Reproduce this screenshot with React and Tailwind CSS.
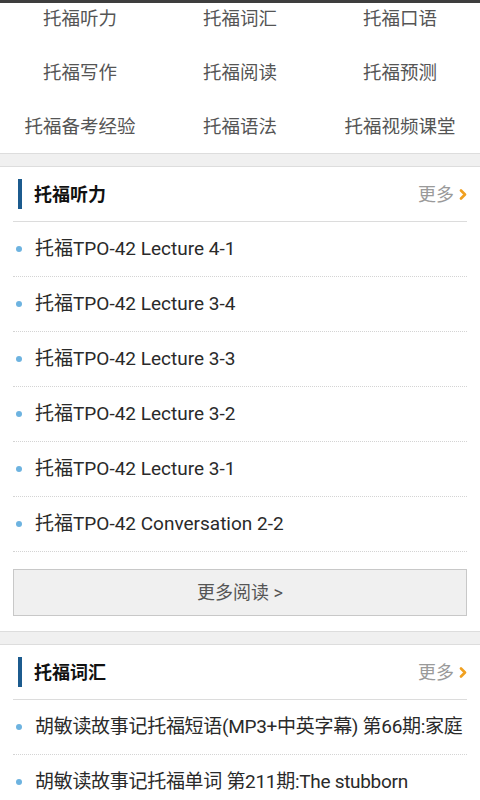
import React from 'react';

const navItems = [
  '托福听力', '托福词汇', '托福口语',
  '托福写作', '托福阅读', '托福预测',
  '托福备考经验', '托福语法', '托福视频课堂',
];

const sections = [
  {
    title: '托福听力',
    items: [
      '托福TPO-42 Lecture 4-1',
      '托福TPO-42 Lecture 3-4',
      '托福TPO-42 Lecture 3-3',
      '托福TPO-42 Lecture 3-2',
      '托福TPO-42 Lecture 3-1',
      '托福TPO-42 Conversation 2-2',
    ],
  },
  {
    title: '托福词汇',
    items: [
      '胡敏读故事记托福短语(MP3+中英字幕) 第66期:家庭',
      '胡敏读故事记托福单词 第211期:The stubborn',
    ],
  },
];

const font = { fontFamily: "Roboto, 'Noto Sans CJK SC', sans-serif" };

const Chevron = () => (
  <svg className="w-[8px] h-[11px] ml-[5px]" viewBox="0 0 8 11" fill="none">
    <path d="M2 1.5l4 4-4 4" stroke="#f0a020" strokeWidth="2.6" strokeLinecap="round" strokeLinejoin="round" />
  </svg>
);

const Section = ({ title, items, more }) => (
  <div className="bg-white px-[13px]">
    {/* Header */}
    <div className="h-[55px] flex items-center border-b border-[#dcdcdc]">
      <div className="w-[4px] h-[30px] bg-[#1c5b8e] ml-[5px]" />
      <div className="ml-[12px] text-[18px] font-bold text-[#111] flex-1">{title}</div>
      <div className="flex items-center text-[18px] text-[#9a9a9a]">
        更多
        <Chevron />
      </div>
    </div>
    {items.map((item, i) => (
      <div
        key={i}
        className="h-[55px] flex items-center border-b border-dotted border-[#d4d4d4]"
      >
        <div className="w-[6px] h-[6px] rounded-full bg-[#6db3e0] ml-[3px] shrink-0" />
        <div
          className={
            item.length > 26
              ? 'ml-[13px] text-[19px] text-[#2a2a2a] whitespace-nowrap tracking-[-0.3px]'
              : 'ml-[13px] text-[19px] text-[#2a2a2a] whitespace-nowrap'
          }
        >
          {item}
        </div>
      </div>
    ))}
    {more && (
      <div className="pt-[17px] pb-[15px]">
        <div className="h-[47px] flex items-center justify-center bg-[#f0f0f0] border border-[#c8c8c8] text-[18px] text-[#555]">
          更多阅读 &gt;
        </div>
      </div>
    )}
  </div>
);

const Divider = () => (
  <div className="h-[14px] bg-[#f0f0f0] border-t border-b border-[#dddddd]" />
);

export default function App() {
  return (
    <div className="w-[480px] h-[800px] overflow-hidden bg-white" style={font}>
      <div className="h-[3px] bg-[#3e3e3e]" />
      {/* Nav grid */}
      <div className="grid grid-cols-3">
        {navItems.map((label, i) => (
          <div
            key={label}
            className={
              i < 3
                ? 'h-[42px] pb-[8px] flex items-center justify-center text-[18.5px] text-[#555]'
                : 'h-[54px] pt-[4px] flex items-center justify-center text-[18.5px] text-[#555]'
            }
          >
            {label}
          </div>
        ))}
      </div>
      <Divider />
      <Section title={sections[0].title} items={sections[0].items} more />
      <Divider />
      <Section title={sections[1].title} items={sections[1].items} />
    </div>
  );
}
